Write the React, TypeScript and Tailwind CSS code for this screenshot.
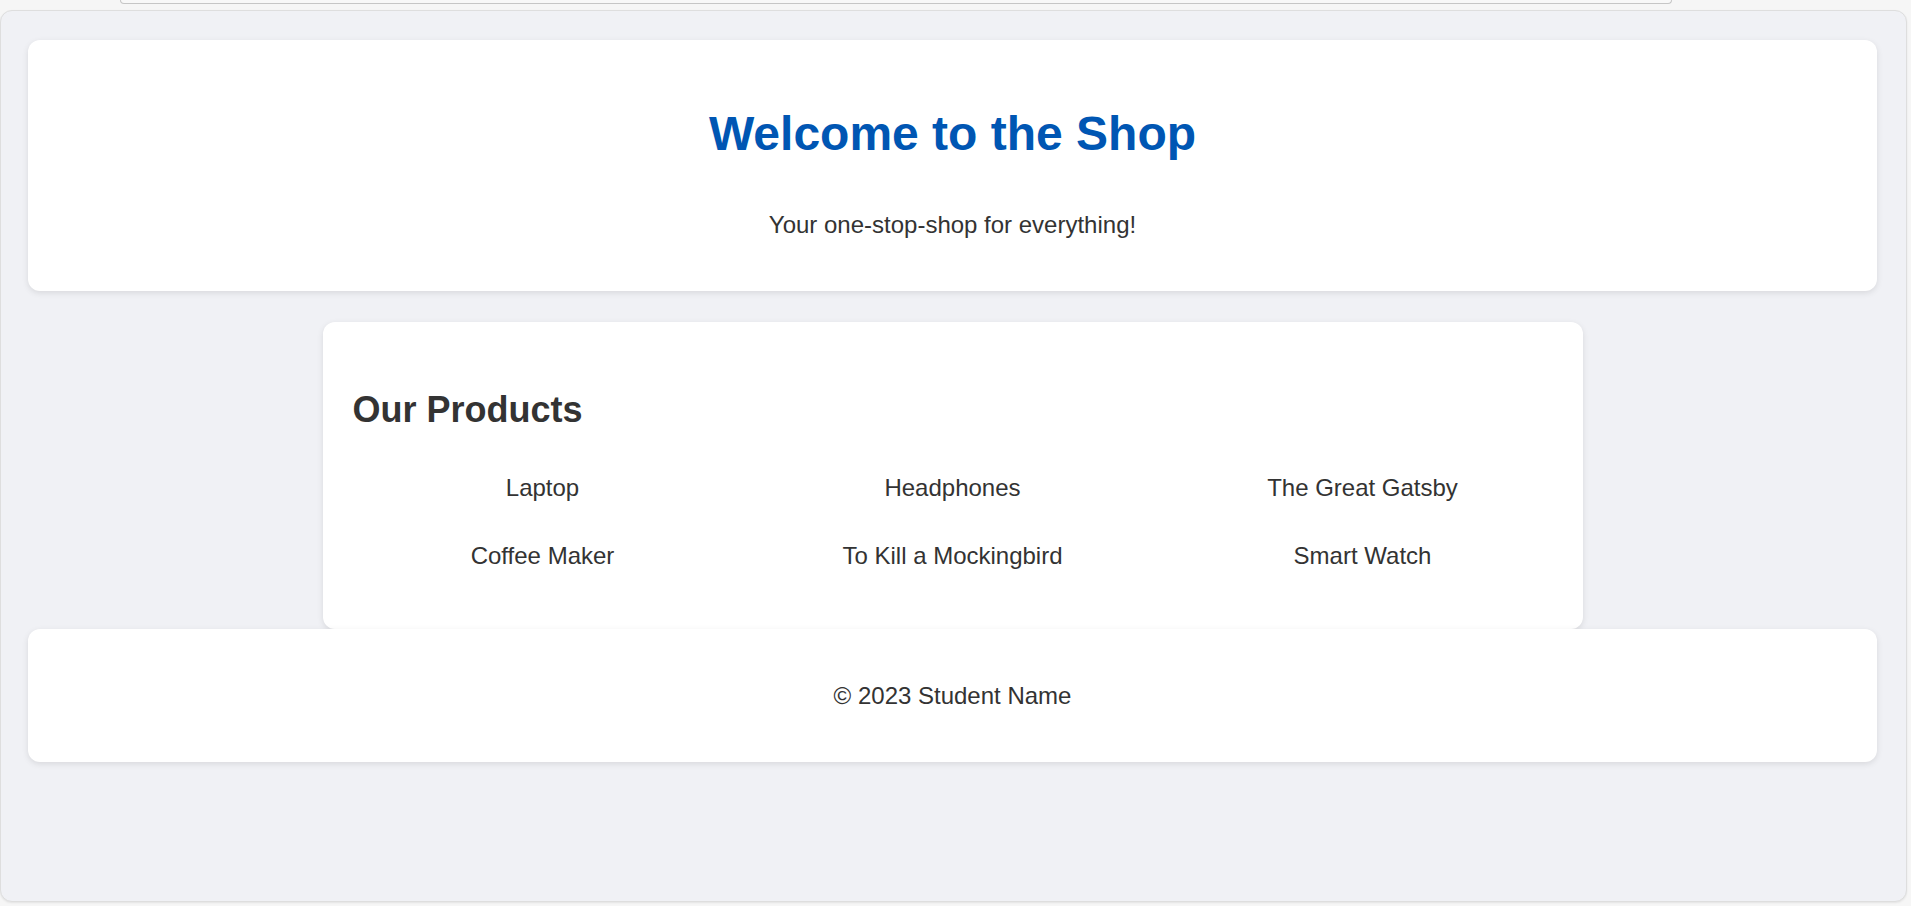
const products = [
  "Laptop",
  "Headphones",
  "The Great Gatsby",
  "Coffee Maker",
  "To Kill a Mockingbird",
  "Smart Watch",
];

const App = () => {
  return (
    <div className="h-[906px] w-[1911px] overflow-hidden bg-[#f6f6f6] font-['Liberation_Sans',Arial,sans-serif] text-[#333]">
      {/* browser bar edge at the very top */}
      <div className="h-[10px]">
        <div className="ml-[120px] h-[4px] w-[1552px] rounded-b-[10px] border-x border-b border-[#c6c6c6] bg-[#f8f8f8]" />
      </div>

      <div className="h-[892px] w-[1907px] rounded-[12px] border border-[#dedede] bg-[#f0f1f5] pl-[27px] pr-[29px] pt-[29px] shadow-[0_1px_2px_rgba(0,0,0,0.08)]">
        <header className="rounded-[12px] bg-white pb-[52px] pt-[66px] text-center shadow-[0_2px_6px_rgba(0,0,0,0.1)]">
          <h1 className="text-[48px] font-bold leading-[55px] text-[#0056b3]">
            Welcome to the Shop
          </h1>
          <p className="mt-[50px] text-[24px] leading-[28px]">
            Your one-stop-shop for everything!
          </p>
        </header>

        <section className="mx-auto mt-[31px] w-[1260px] rounded-[12px] bg-white px-[30px] pb-[59px] pt-[67px] shadow-[0_2px_6px_rgba(0,0,0,0.1)]">
          <h2 className="text-[36px] font-bold leading-[41px]">Our Products</h2>
          <div className="mt-[44px] grid grid-cols-3 gap-x-[30px] gap-y-[40px]">
            {products.map((name) => (
              <div key={name} className="text-center text-[24px] leading-[28px]">
                {name}
              </div>
            ))}
          </div>
        </section>

        <footer className="relative rounded-[12px] bg-white pb-[52px] pt-[53px] text-center text-[24px] leading-[28px] shadow-[0_2px_6px_rgba(0,0,0,0.1)]">
          © 2023 Student Name
        </footer>
      </div>
    </div>
  );
};

export default App;
